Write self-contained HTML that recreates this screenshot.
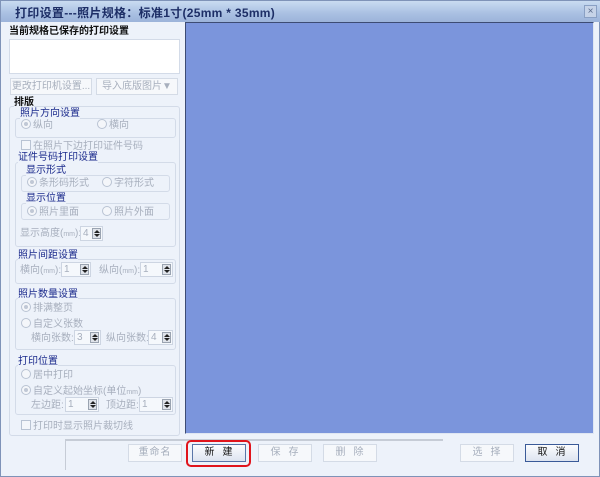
<!DOCTYPE html>
<html><head><meta charset="utf-8"><style>
*{margin:0;padding:0;box-sizing:border-box}
body{width:600px;height:477px;overflow:hidden;background:#fff;font-family:"Liberation Sans","Noto Sans CJK SC","WenQuanYi Zen Hei",sans-serif;font-size:10px;position:relative;white-space:nowrap}
.win{position:absolute;left:0;top:0;width:600px;height:477px;background:#edf2fa;border:1px solid #7f93b8}
.title{position:absolute;left:0;top:0;width:600px;height:21px;background:linear-gradient(#c9dbf1,#a9c0e2 60%,#9cb3da);}
.title span{position:absolute;left:14px;top:3px;font-size:12px;font-weight:bold;color:#1d2e66;letter-spacing:0.3px}
.x{position:absolute;left:583px;top:4px;width:13px;height:13px;border:1px solid #8aa0c4;background:#c6d3e8;color:#5a6a8a;font-size:10px;line-height:11px;text-align:center}
.a{position:absolute;white-space:nowrap;line-height:13px}
.dis{color:#a7afbd}
.blue{color:#1b2a8c}
.grp{position:absolute;border:1px solid #d3dbe8;border-radius:3px}
.btn{position:absolute;height:17px;border:1px solid #d4dbe6;background:#f6f8fb;color:#a7afbd;text-align:center;line-height:15px;font-size:10px;white-space:nowrap;overflow:hidden}
.rad{display:inline-block;width:10px;height:10px;border:1px solid #b9c3d3;border-radius:50%;background:#f4f6fa;vertical-align:-1px;margin-right:2px;position:relative}
.rad.on:after{content:"";position:absolute;left:2px;top:2px;width:4px;height:4px;border-radius:50%;background:#c0c8d6}
.chk{display:inline-block;width:10px;height:10px;border:1px solid #b9c3d3;background:#f4f6fa;vertical-align:-1px;margin-right:2px}
.spin{position:absolute;height:15px;border:1px solid #cdd5e2;background:#f5f8fc;color:#a7afbd;font-size:10px;padding-left:2px;line-height:13px}
.spin i{position:absolute;right:1px;top:1px;width:9px;height:11px;background:#dfe3ea;border:1px solid #9aa3b0}
.spin i:before{content:"";position:absolute;left:1px;top:1px;border-left:3px solid transparent;border-right:3px solid transparent;border-bottom:3px solid #222}
.spin i:after{content:"";position:absolute;left:1px;bottom:1px;border-left:3px solid transparent;border-right:3px solid transparent;border-top:3px solid #222}
small{font-size:7px}
</style></head><body>
<div class="win">
<div class="title"><span>打印设置---照片规格：标准1寸(25mm * 35mm)</span><div class="x">×</div></div>
<div style="position:absolute;left:184px;top:21px;width:409px;height:412px;background:#7b95dc;border:1px solid #3d4c74;border-right-color:#dfe6f2;border-bottom-color:#dfe6f2"></div>

<div class="a" style="left:8px;top:24px;font-weight:bold;color:#111">当前规格已保存的打印设置</div>
<div style="position:absolute;left:8px;top:38px;width:171px;height:35px;background:#fff;border:1px solid #d3dbe8"></div>
<div class="btn" style="left:9px;top:77px;width:82px;">更改打印机设置...</div>
<div class="btn" style="left:95px;top:77px;width:82px;">导入底版图片▼</div>

<div class="grp" style="left:8px;top:105px;width:171px;height:330px"></div>
<div class="a" style="left:13px;top:95px;font-weight:bold;color:#111;background:#edf2fa">排版</div>

<div class="grp" style="left:14px;top:117px;width:161px;height:20px"></div>
<div class="a blue" style="left:19px;top:106px;background:#edf2fa">照片方向设置</div>
<div class="a dis" style="left:20px;top:118px"><span class="rad on"></span>纵向</div>
<div class="a dis" style="left:96px;top:118px"><span class="rad"></span>横向</div>

<div class="a dis" style="left:20px;top:139px"><span class="chk"></span>在照片下边打印证件号码</div>

<div class="grp" style="left:14px;top:161px;width:161px;height:85px"></div>
<div class="a blue" style="left:17px;top:150px;background:#edf2fa">证件号码打印设置</div>
<div class="grp" style="left:20px;top:174px;width:149px;height:17px"></div>
<div class="a blue" style="left:25px;top:163px;background:#edf2fa">显示形式</div>
<div class="a dis" style="left:26px;top:176px"><span class="rad on"></span>条形码形式</div>
<div class="a dis" style="left:101px;top:176px"><span class="rad"></span>字符形式</div>
<div class="grp" style="left:20px;top:202px;width:149px;height:17px"></div>
<div class="a blue" style="left:25px;top:191px;background:#edf2fa">显示位置</div>
<div class="a dis" style="left:26px;top:205px"><span class="rad on"></span>照片里面</div>
<div class="a dis" style="left:101px;top:205px"><span class="rad"></span>照片外面</div>
<div class="a dis" style="left:19px;top:226px">显示高度(<small>mm</small>):</div>
<div class="spin" style="left:79px;top:225px;width:23px">4<i></i></div>

<div class="grp" style="left:14px;top:258px;width:161px;height:25px"></div>
<div class="a blue" style="left:17px;top:248px;background:#edf2fa">照片间距设置</div>
<div class="a dis" style="left:19px;top:263px">横向(<small>mm</small>):</div>
<div class="spin" style="left:60px;top:261px;width:30px">1<i></i></div>
<div class="a dis" style="left:98px;top:263px">纵向(<small>mm</small>):</div>
<div class="spin" style="left:139px;top:261px;width:33px">1<i></i></div>

<div class="grp" style="left:14px;top:297px;width:161px;height:52px"></div>
<div class="a blue" style="left:17px;top:287px;background:#edf2fa">照片数量设置</div>
<div class="a dis" style="left:20px;top:301px"><span class="rad on"></span>排满整页</div>
<div class="a dis" style="left:20px;top:317px"><span class="rad"></span>自定义张数</div>
<div class="a dis" style="left:30px;top:331px">横向张数:</div>
<div class="spin" style="left:73px;top:329px;width:27px">3<i></i></div>
<div class="a dis" style="left:105px;top:331px">纵向张数:</div>
<div class="spin" style="left:147px;top:329px;width:25px">4<i></i></div>

<div class="grp" style="left:14px;top:364px;width:161px;height:50px"></div>
<div class="a blue" style="left:17px;top:354px;background:#edf2fa">打印位置</div>
<div class="a dis" style="left:20px;top:368px"><span class="rad"></span>居中打印</div>
<div class="a dis" style="left:20px;top:384px"><span class="rad on"></span>自定义起始坐标(单位<small>mm</small>)</div>
<div class="a dis" style="left:30px;top:398px">左边距:</div>
<div class="spin" style="left:64px;top:396px;width:34px">1<i></i></div>
<div class="a dis" style="left:105px;top:398px">顶边距:</div>
<div class="spin" style="left:138px;top:396px;width:34px">1<i></i></div>
<div class="a dis" style="left:20px;top:419px"><span class="chk"></span>打印时显示照片裁切线</div>

<div style="position:absolute;left:64px;top:438px;width:378px;height:31px;border-top:2px solid #c6ccd6;border-left:1px solid #c6ccd6"></div>
<div class="btn" style="left:127px;top:443px;width:54px;height:18px;letter-spacing:1px">重命名</div>
<div style="position:absolute;left:185px;top:439px;width:65px;height:27px;border:2px solid #e0141c;border-radius:5px"></div>
<div class="btn" style="left:191px;top:443px;width:54px;height:18px;color:#111;background:linear-gradient(#fbfcfe,#dde4f0);border-color:#5a76a8;letter-spacing:8px;padding-left:7px">新建</div>
<div class="btn" style="left:257px;top:443px;width:54px;height:18px;letter-spacing:8px;padding-left:7px">保存</div>
<div class="btn" style="left:322px;top:443px;width:54px;height:18px;letter-spacing:8px;padding-left:7px">删除</div>
<div class="btn" style="left:459px;top:443px;width:54px;height:18px;letter-spacing:8px;padding-left:7px">选择</div>
<div class="btn" style="left:524px;top:443px;width:54px;height:18px;color:#111;background:linear-gradient(#fbfcfe,#dde4f0);border-color:#3a5a98;letter-spacing:8px;padding-left:7px">取消</div>
</div>
</body></html>
